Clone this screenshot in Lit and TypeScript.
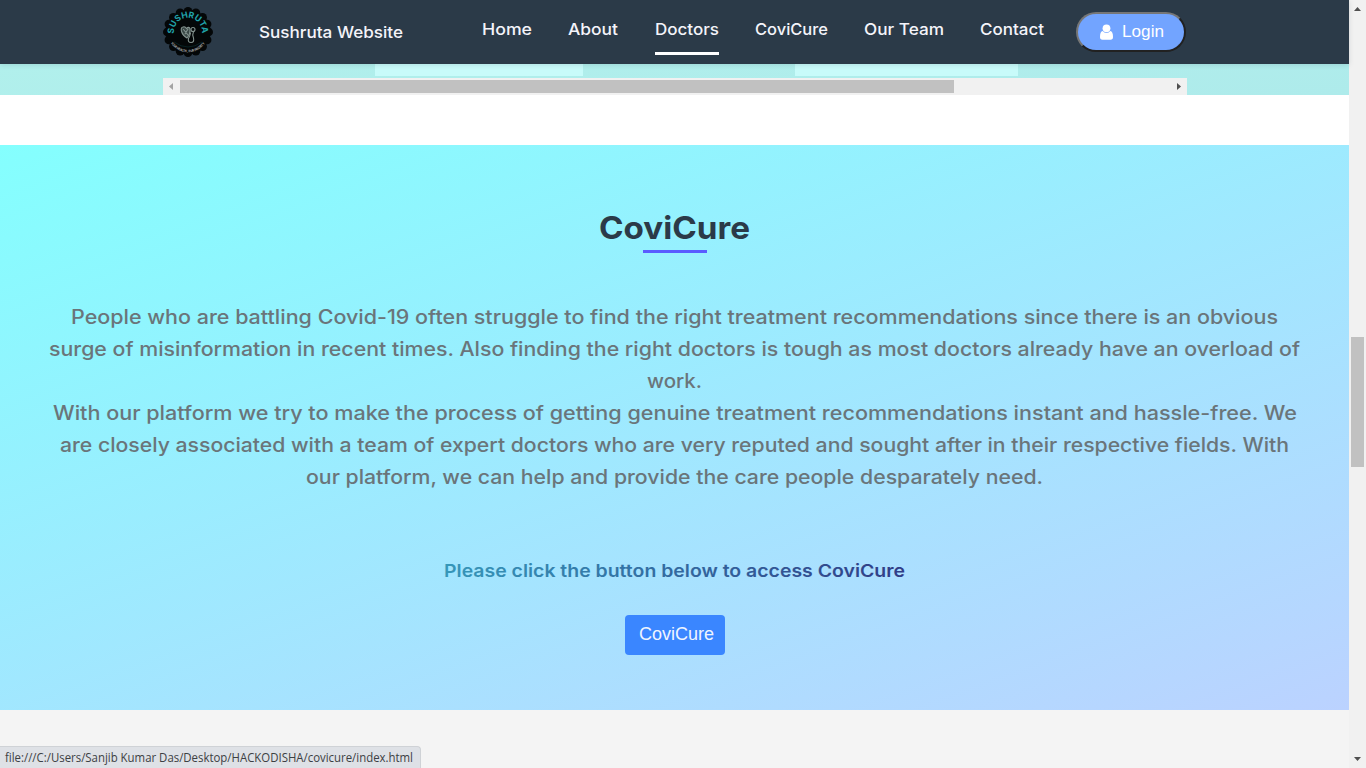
import { LitElement, html, svg, css } from "lit";
import { customElement, property } from "lit/decorators.js";

/* A single line of text set to an exact measure. */
@customElement("fit-text")
class FitText extends LitElement {
  @property() text = "";
  @property({ type: Number }) w = 100;
  @property({ type: Number }) h = 20;
  @property({ type: Number }) base = 15;
  @property() blend = "";
  static styles = css`
    :host { display: block; }
    svg { display: block; overflow: visible; }
    text { fill: currentColor; }
    .blend { fill: url(#g); }
  `;
  render() {
    return html`<svg width=${this.w} height=${this.h}>
      <defs><linearGradient id="g"><stop offset="0" stop-color="#3697b9"/><stop offset="1" stop-color="#303c86"/></linearGradient></defs>
      <text class=${this.blend ? "blend" : ""} x="0" y=${this.base} textLength=${this.w} lengthAdjust="spacingAndGlyphs">${this.text}</text>
    </svg>`;
  }
}

const lines: [string, number][] = [
  ["People who are battling Covid-19 often struggle to find the right treatment recommendations since there is an obvious", 1207],
  ["surge of misinformation in recent times. Also finding the right doctors is tough as most doctors already have an overload of", 1251],
  ["work.", 55],
  ["With our platform we try to make the process of getting genuine treatment recommendations instant and hassle-free. We", 1244],
  ["are closely associated with a team of expert doctors who are very reputed and sought after in their respective fields. With", 1229],
  ["our platform, we can help and provide the care people desparately need.", 737],
];

const links: [string, number][] = [
  ["Home", 50], ["About", 50], ["Doctors", 64], ["CoviCure", 73], ["Our Team", 80], ["Contact", 64],
];

const lobes = Array.from({ length: 16 }, (_, i) => {
  const a = (i * Math.PI) / 8;
  return svg`<circle cx=${25 + 20.6 * Math.cos(a)} cy=${25 + 20.6 * Math.sin(a)} r="4.4"/>`;
});

@customElement("app-root")
class AppRoot extends LitElement {
  static styles = css`
    :host { display: block; position: relative; width: 1366px; height: 768px; overflow: hidden; font-family: Inter, sans-serif; }
    .frame { display: flex; height: 768px; }
    .page { width: 1349px; display: flex; flex-direction: column; background: #fff; }
    .nav { height: 64px; flex: none; background: #2b3a48; display: flex; align-items: flex-start; box-sizing: border-box; padding-left: 163px; color: #f4f4fa; font-size: 16px; font-weight: 500; position: relative; box-shadow: 0 1px 5px rgba(43, 58, 72, .15); z-index: 1; }
    .logo { display: block; margin-top: 7px; width: 50px; height: 50px; }
    .brand { margin: 20px 0 0 46px; font-size: 16.2px; }
    .links { display: flex; gap: 36.3px; margin: 17px 0 0 79px; }
    .link { height: 35px; border-bottom: 3px solid transparent; }
    .on { border-color: #fff; }
    .login { margin: 12px 0 0 31.5px; width: 110px; height: 40px; box-sizing: border-box; border: 2px solid; border-color: #767676 #212121 #212121 #767676; border-radius: 20px; background: #72a4ff; color: #fff; display: flex; align-items: center; padding-left: 22px; gap: 9px; font: 17px "Liberation Sans", sans-serif; }
    .strip { height: 31px; flex: none; background: linear-gradient(175deg, #b1f0ec, #aeebeb); padding: 0 162px 0 163px; display: flex; flex-direction: column; }
    .cards { height: 12px; display: flex; padding-left: 212px; gap: 212px; margin-bottom: 2px; }
    .card { background: #c8fbfa; width: 208px; }
    .wide { width: 223px; }
    .hbar { height: 17px; background: #f1f1f1; display: flex; align-items: center; }
    .hthumb { width: 774px; height: 13px; background: #c1c1c1; margin-right: 216px; }
    .arrow { display: block; flex: none; width: 17px; height: 17px; }
    .covi { margin-top: 50px; height: 565px; flex: none; box-sizing: border-box; padding-top: 61px; background: linear-gradient(160deg, #84fffe 0%, #bbd2ff 100%); display: flex; flex-direction: column; align-items: center; }
    .title { color: #2b3a48; font-size: 31.5px; font-weight: 650; }
    .rule { width: 64px; height: 3px; background: #5a5cff; }
    .body { margin-top: 48px; color: #6a757a; font-size: 19.5px; font-weight: 450; display: flex; flex-direction: column; align-items: center; }
    .hint { margin-top: 62px; font-size: 17.5px; font-weight: 600; }
    .btn { margin-top: 30px; width: 100px; height: 40px; border-radius: 4px; background: #3a86ff; color: #eef5ff; font: 18px "Liberation Sans", sans-serif; display: flex; box-sizing: border-box; padding-left: 14.5px; }
    .foot { flex: 1; background: #f4f4f4; }
    .vbar { width: 17px; background: #f1f1f1; display: flex; flex-direction: column; align-items: center; }
    .vthumb { margin: 320px 0 284px; width: 13px; height: 130px; background: #c1c1c1; }
    .status { position: absolute; left: 0; bottom: 0; z-index: 2; width: 421px; height: 22px; box-sizing: border-box; background: #dee1e6; border: 1px solid #cfd2d6; border-left: 0; border-bottom: 0; border-top-right-radius: 4px; padding-left: 5px; color: #3c4043; font: 12px "Open Sans", sans-serif; }
  `;

  logo() {
    return html`<svg class="logo" viewBox="0 0 50 50">
      <g fill="#040708">${lobes}<circle cx="25" cy="25" r="22.2"/></g>
      <path id="top" d="M11.200 27.200A14 14 0 1 1 38.800 27.200" fill="none"/>
      <path id="low" d="M7.500 35.500A20.500 20.500 0 0 0 42.500 35.500" fill="none"/>
      <text font-size="8.600" font-weight="700" fill="#20a3ab"><textPath href="#top" textLength="47" startOffset="0.500">SUSHRUTA</textPath></text>
      <text font-size="3.400" font-weight="700" fill="#b4b9b9"><textPath href="#low" textLength="40" lengthAdjust="spacingAndGlyphs" startOffset="0.500">YOUR HEALTH , OUR PRIORITY</textPath></text>
      <path d="M11 35Q25 45 39 35" fill="none" stroke="#0c3438" stroke-width=".6"/>
      <g fill="none" stroke="#84938f" stroke-width="1.100" stroke-linecap="round">
        <path d="M20 20Q17.500 20.500 18.500 24.500Q20 29 24 31Q27.500 27 27 22Q26 19 23.500 21.500Q22 19 20 20Z" fill="#3a4745"/>
        <path d="M20.500 22.500L25 28M25 22L22 27"/>
        <circle cx="30" cy="22.500" r="2"/><path d="M30.500 24.500Q29 28 30.500 31Q31.500 35.500 28 35.500Q24.500 35.500 25.500 31.500Q27 29 27.500 26"/>
      </g>
    </svg>`;
  }

  render() {
    return html`<div class="frame">
      <main class="page">
        <nav class="nav">
          ${this.logo()}
          <fit-text class="brand" text="Sushruta Website" .w=${144} .h=${24} .base=${18}></fit-text>
          <div class="links">
            ${links.map(([t, w]) => html`<div class="link ${t === "Doctors" ? "on" : ""}"><fit-text text=${t} .w=${w} .h=${24} .base=${18}></fit-text></div>`)}
          </div>
          <div class="login">
            <svg width="13" height="16" viewBox="0 0 13 16" fill="#fff"><circle cx="6.500" cy="4.300" r="3.900"/><path d="M2.700 7Q4.200 9 6.500 9T10.300 7Q13 7.500 13 13Q13 15.700 10.500 15.700H2.500Q0 15.700 0 13Q0 7.500 2.700 7Z"/></svg>
            <fit-text text="Login" .w=${42} .h=${20} .base=${15}></fit-text>
          </div>
        </nav>
        <div class="strip">
          <div class="cards"><div class="card"></div><div class="card wide"></div></div>
          <div class="hbar">
            <svg class="arrow"><path d="M10 5V12L6 8.500Z" fill="#a3a3a3"/></svg>
            <div class="hthumb"></div>
            <svg class="arrow"><path d="M7 5V12L11 8.500Z" fill="#505050"/></svg>
          </div>
        </div>
        <section class="covi">
          <fit-text class="title" text="CoviCure" .w=${151} .h=${44} .base=${33}></fit-text>
          <div class="rule"></div>
          <div class="body">${lines.map(([t, w]) => html`<fit-text text=${t} .w=${w} .h=${32} .base=${23}></fit-text>`)}</div>
          <fit-text class="hint" blend="1" text="Please click the button below to access CoviCure" .w=${461} .h=${30} .base=${22}></fit-text>
          <div class="btn"><fit-text text="CoviCure" .w=${75} .h=${40} .base=${25}></fit-text></div>
        </section>
        <footer class="foot"></footer>
      </main>
      <aside class="vbar">
        <svg class="arrow"><path d="M5 11H12L8.500 7Z" fill="#505050"/></svg>
        <div class="vthumb"></div>
        <svg class="arrow"><path d="M5 6H12L8.500 10Z" fill="#505050"/></svg>
      </aside>
    </div>
    <div class="status"><fit-text text="file:///C:/Users/Sanjib Kumar Das/Desktop/HACKODISHA/covicure/index.html" .w=${408} .h=${20} .base=${15}></fit-text></div>`;
  }
}
